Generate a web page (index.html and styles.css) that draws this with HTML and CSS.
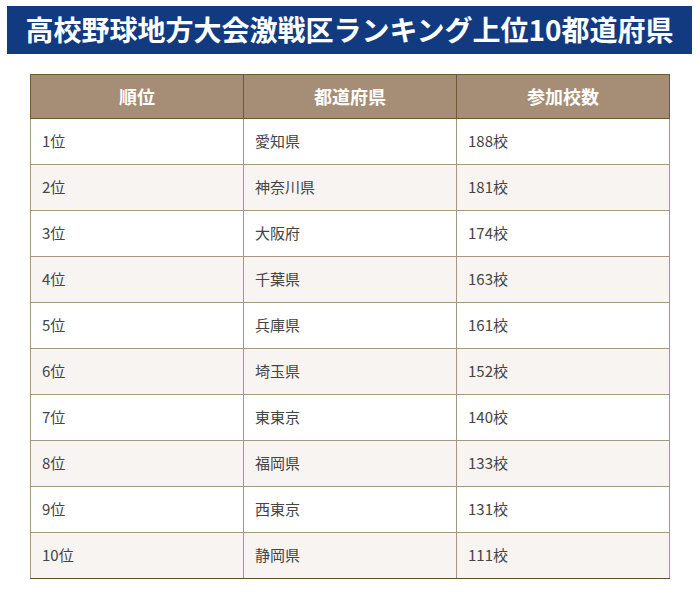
FILE: index.html
```html
<!DOCTYPE html>
<html lang="ja">
<head>
<meta charset="utf-8">
<link rel="stylesheet" href="styles.css">
</head>
<body>
<h1 class="title">高校野球地方大会激戦区ランキング上位10都道府県</h1>
<table class="rank">
<thead>
<tr><th>順位</th><th>都道府県</th><th>参加校数</th></tr>
</thead>
<tbody>
<tr><td>1位</td><td>愛知県</td><td>188校</td></tr>
<tr><td>2位</td><td>神奈川県</td><td>181校</td></tr>
<tr><td>3位</td><td>大阪府</td><td>174校</td></tr>
<tr><td>4位</td><td>千葉県</td><td>163校</td></tr>
<tr><td>5位</td><td>兵庫県</td><td>161校</td></tr>
<tr><td>6位</td><td>埼玉県</td><td>152校</td></tr>
<tr><td>7位</td><td>東東京</td><td>140校</td></tr>
<tr><td>8位</td><td>福岡県</td><td>133校</td></tr>
<tr><td>9位</td><td>西東京</td><td>131校</td></tr>
<tr><td>10位</td><td>静岡県</td><td>111校</td></tr>
</tbody>
</table>
</body>
</html>
```
FILE: styles.css
```css
html, body {
  margin: 0;
  padding: 0;
  background: #ffffff;
}
body {
  padding: 6px 8px 0 7px;
  font-family: "Noto Sans CJK JP", "Noto Sans", sans-serif;
}
.title {
  margin: 0;
  height: 48px;
  background: #113a80;
  color: #ffffff;
  font-size: 28px;
  font-weight: bold;
  line-height: 46px;
  text-align: center;
  letter-spacing: 0;
}
.rank {
  margin: 20px 0 0 23px;
  width: 640px;
  border-collapse: collapse;
  table-layout: fixed;
  font-size: 15px;
  color: #444444;
}
.rank th {
  background: #a68d76;
  color: #ffffff;
  font-weight: bold;
  font-size: 18px;
  line-height: 20px;
  height: 41px;
  padding: 0 0 2px;
  border: 1px solid #6e5834;
  text-align: center;
}
.rank td {
  height: 43px;
  line-height: 18px;
  padding: 0 0 2px 11px;
  border: 1px solid #a69880;
  text-align: left;
}
.rank tbody tr:nth-child(even) td {
  background: #f8f4f1;
}
.rank tbody tr:last-child td {
  border-bottom-color: #5e4c30;
}
```
